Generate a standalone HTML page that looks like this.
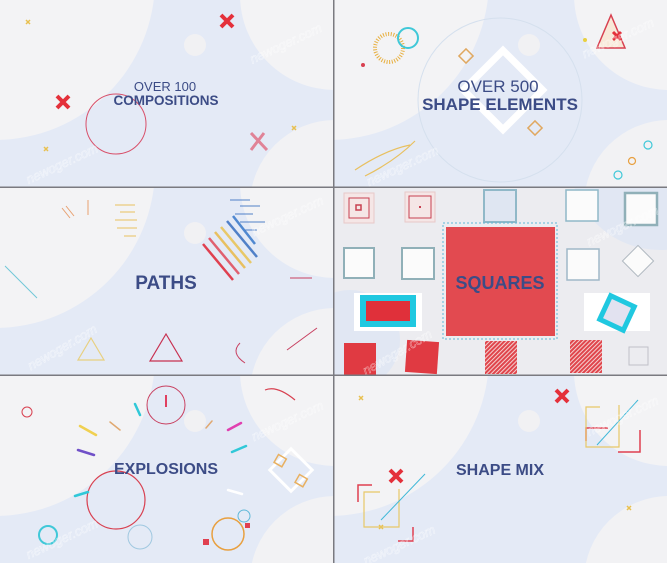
<!DOCTYPE html>
<html><head><meta charset="utf-8"><style>
html,body{margin:0;padding:0;background:#e4eaf6;width:667px;height:563px;overflow:hidden}
svg{display:block}
text{font-family:"Liberation Sans",sans-serif;}
.t{fill:#3c4c86;font-weight:bold;text-anchor:middle}
.l{fill:#3c4c86;text-anchor:middle;font-weight:300}
.wm{fill:none;stroke:#fff;font-size:13px;font-style:italic;stroke-width:0.5;opacity:.55}
</style></head><body>
<svg width="667" height="563" viewBox="0 0 667 563" xmlns="http://www.w3.org/2000/svg">
<defs>
<g id="bg">
<rect width="334" height="188" fill="#e4eaf6"/>
<circle cx="-5" cy="-20" r="160" fill="#f3f3f5"/>
<circle cx="335" cy="-5" r="95" fill="#f3f3f5"/>
<circle cx="335" cy="205" r="85" fill="#f2f2f4"/>
<circle cx="195" cy="45" r="11" fill="#f1f1f3"/>
</g>
<pattern id="hatch" width="3" height="3" patternUnits="userSpaceOnUse" patternTransform="rotate(45)"><rect width="3" height="3" fill="#f4d0d0"/><rect width="2" height="3" fill="#e0454c"/></pattern>
</defs>

<svg x="0" y="0" width="334" height="188"><use href="#bg"/></svg>
<svg x="334" y="0" width="334" height="188"><use href="#bg"/></svg>
<svg x="0" y="188" width="334" height="188"><use href="#bg"/></svg>
<svg x="334" y="188" width="334" height="188"><rect width="334" height="188" fill="#ececf0"/><circle cx="326" cy="-28" r="90" fill="#e1e7f3"/><circle cx="16" cy="152" r="50" fill="#e1e7f3"/></svg>
<svg x="0" y="376" width="334" height="188"><use href="#bg"/></svg>
<svg x="334" y="376" width="334" height="188"><use href="#bg"/></svg>

<!-- Panel 1 -->
<path d="M221 15l12 12M233 15l-12 12" stroke="#e4303a" stroke-width="4"/>
<path d="M57 96l12 12M69 96l-12 12" stroke="#e4303a" stroke-width="4"/>
<path d="M251 133l16 17M264 133l-13 17" stroke="#e06a80" stroke-width="3" opacity=".8"/>
<path d="M26 20l4 4M30 20l-4 4M44 147l4 4M48 147l-4 4M292 126l4 4M296 126l-4 4" stroke="#e8c050" stroke-width="1.5"/>
<circle cx="116" cy="124" r="30" fill="none" stroke="#d8506a" stroke-width="1"/>
<text x="165" y="91" class="l" font-size="13">OVER 100</text>
<text x="166" y="105" class="t" font-size="13.5">COMPOSITIONS</text>
<text x="245" y="50" class="wm" transform="rotate(-25 280 40)">newoger.com</text>
<text x="20" y="175" class="wm" transform="rotate(-25 45 160)">newoger.com</text>

<!-- Panel 2 -->
<circle cx="500" cy="100" r="82" fill="none" stroke="#d5e0ee" stroke-width="1"/>
<rect x="475" y="62" width="56" height="56" fill="none" stroke="#fff" stroke-width="7" transform="rotate(45 503 90)"/>
<circle cx="389" cy="48" r="14" fill="none" stroke="#e8b040" stroke-width="4" stroke-dasharray="1 1.6"/>
<circle cx="408" cy="38" r="10" fill="none" stroke="#40c8d8" stroke-width="2"/>
<circle cx="363" cy="65" r="2" fill="#d84050"/>
<rect x="461" y="51" width="10" height="10" fill="none" stroke="#e0a860" stroke-width="1.5" transform="rotate(45 466 56)"/>
<rect x="530" y="123" width="10" height="10" fill="none" stroke="#e0a860" stroke-width="1.5" transform="rotate(45 535 128)"/>
<path d="M597 48l14-33 14 33z" fill="#f8e8d8" stroke="#d84050" stroke-width="1.5"/>
<path d="M613 32l8 8M621 32l-8 8" stroke="#e4303a" stroke-width="3"/>
<circle cx="585" cy="40" r="2" fill="#e8d040"/>
<circle cx="648" cy="145" r="4" fill="none" stroke="#40c8d8" stroke-width="1.2"/>
<circle cx="632" cy="161" r="3.5" fill="none" stroke="#e8a040" stroke-width="1.2"/>
<circle cx="618" cy="175" r="4" fill="none" stroke="#40c8d8" stroke-width="1.2"/>
<path d="M355 170q30 -20 55 -25M365 176q30 -15 50 -35" stroke="#e8c060" fill="none" stroke-width="1.2"/>
<text x="498" y="92" class="l" font-size="17">OVER 500</text>
<text x="500" y="110" class="t" font-size="17">SHAPE ELEMENTS</text>
<text x="360" y="175" class="wm" transform="rotate(-25 390 160)">newoger.com</text>
<text x="575" y="45" class="wm" transform="rotate(-25 610 30)">newoger.com</text>

<!-- Panel 3 -->
<g stroke-width="2.5">
<path d="M203 244l30 36" stroke="#e04050"/><path d="M209 238l30 36" stroke="#e06070"/>
<path d="M215 232l30 36" stroke="#e8c060"/><path d="M221 227l30 36" stroke="#e8c868"/>
<path d="M227 221l30 36" stroke="#5080c8"/><path d="M233 216l22 28" stroke="#5088d0"/>
</g>
<path d="M91 338l-13 22h26z" fill="none" stroke="#e8d080" stroke-width="1.2"/>
<path d="M166 334l-16 27h32z" fill="none" stroke="#c83050" stroke-width="1.2"/>
<path d="M5 266l32 32" stroke="#70c8d8" stroke-width="1"/>
<path d="M287 350l30-22M290 278h22" stroke="#c84060" stroke-width="1"/>
<path d="M240 343q-10 10 5 20" fill="none" stroke="#c84060" stroke-width="1"/>
<g stroke-width="1"><path d="M115 205h20M120 212h15M115 220h22M117 228h20M124 236h12" stroke="#e8c060"/><path d="M230 200h20M240 206h20M235 214h18M240 222h25M245 230h12" stroke="#5080c8"/><path d="M62 208l8 10M66 206l8 10M88 200v15" stroke="#e8a070"/></g>
<text x="166" y="289" class="t" font-size="19">PATHS</text>
<text x="20" y="360" class="wm" transform="rotate(-30 45 345)">newoger.com</text>
<text x="245" y="225" class="wm" transform="rotate(-25 275 210)">newoger.com</text>

<!-- Panel 4 -->
<g fill="none">
<rect x="344" y="193" width="30" height="30" fill="#f5e6e6" stroke="#e8c8c8"/><rect x="349" y="198" width="20" height="20" stroke="#c84050"/><rect x="356" y="205" width="5" height="5" stroke="#c84050" stroke-width="1.5"/>
<rect x="405" y="192" width="30" height="30" fill="#f5e6e6" stroke="#e8c8c8"/><rect x="409" y="196" width="22" height="22" stroke="#c84050"/><rect x="419" y="206" width="2" height="2" fill="#c84050"/>
<rect x="484" y="190" width="32" height="32" fill="#dfe6f2" stroke="#90b8c8" stroke-width="2"/>
<rect x="566" y="190" width="32" height="31" fill="#fbfbfb" stroke="#90b8c8" stroke-width="1.5"/>
<rect x="625" y="193" width="32" height="32" fill="#fbfbfb" stroke="#90b0b8" stroke-width="2.5"/>
<rect x="344" y="248" width="30" height="30" fill="#fbfbfb" stroke="#90b0b8" stroke-width="2"/>
<rect x="402" y="248" width="32" height="31" fill="#fbfbfb" stroke="#90b0b8" stroke-width="2"/>
<rect x="567" y="249" width="32" height="31" fill="#fbfbfb" stroke="#a0b8c8" stroke-width="1.5"/>
<rect x="627" y="250" width="22" height="22" fill="#fbfbfb" stroke="#b0b8c0" stroke-width="1" transform="rotate(45 638 261)"/>
</g>
<rect x="354" y="293" width="68" height="38" fill="#fff"/>
<rect x="363" y="298" width="50" height="26" fill="#e0303a" stroke="#20c8e0" stroke-width="6"/>
<rect x="584" y="293" width="66" height="38" fill="#fff"/>
<rect x="604" y="300" width="26" height="26" fill="#e2e2f0" stroke="#20c8e0" stroke-width="5" transform="rotate(25 617 313)"/>
<rect x="443" y="223" width="114" height="116" fill="none" stroke="#60b8d8" stroke-dasharray="2 2"/>
<rect x="446" y="227" width="109" height="109" fill="#e24a50"/>
<text x="500" y="289" class="t" font-size="18">SQUARES</text>
<rect x="344" y="343" width="32" height="32" fill="#e03a42"/>
<rect x="406" y="341" width="32" height="32" fill="#e03a42" transform="rotate(4 422 357)"/>
<rect x="485" y="341" width="32" height="33" fill="url(#hatch)"/>
<rect x="570" y="340" width="32" height="33" fill="url(#hatch)"/>
<rect x="629" y="347" width="19" height="18" fill="none" stroke="#c0c0c8"/>
<text x="355" y="365" class="wm" transform="rotate(-30 380 350)">newoger.com</text>
<text x="580" y="235" class="wm" transform="rotate(-25 610 220)">newoger.com</text>

<!-- Panel 5 -->
<circle cx="166" cy="405" r="19" fill="none" stroke="#c84060" stroke-width="1"/><path d="M166 395v12" stroke="#e04060" stroke-width="2"/>
<circle cx="116" cy="500" r="29" fill="none" stroke="#d84050" stroke-width="1.2"/>
<circle cx="27" cy="412" r="5" fill="none" stroke="#d84050" stroke-width="1"/>
<circle cx="48" cy="535" r="9" fill="none" stroke="#40c8d8" stroke-width="2"/>
<circle cx="228" cy="534" r="16" fill="none" stroke="#e8a040" stroke-width="1.5"/>
<circle cx="140" cy="537" r="12" fill="none" stroke="#a0c8e0" stroke-width="1"/>
<circle cx="244" cy="516" r="6" fill="none" stroke="#60b8d8" stroke-width="1"/>
<rect x="203" y="539" width="6" height="6" fill="#e04050"/><rect x="245" y="523" width="5" height="5" fill="#e04050"/>
<g stroke-width="2.5" stroke-linecap="round">
<path d="M80 426l16 9" stroke="#f0d050"/><path d="M78 450l16 5" stroke="#7050c8"/><path d="M135 404l5 11" stroke="#30c8d8"/>
<path d="M228 430l13 -7" stroke="#e040b0"/><path d="M232 452l14 -6" stroke="#30c8d8"/><path d="M75 496l13 -4" stroke="#30c8d8"/>
<path d="M110 422l10 8M206 428l6 -7" stroke="#e0a870" stroke-width="1.5"/><path d="M228 490l14 4" stroke="#fff"/>
</g>
<rect x="276" y="455" width="30" height="30" fill="none" stroke="#fff" stroke-width="3" transform="rotate(45 291 470)"/>
<rect x="276" y="456" width="9" height="9" fill="none" stroke="#e8b060" stroke-width="1.5" transform="rotate(30 280 460)"/>
<rect x="297" y="476" width="9" height="9" fill="none" stroke="#e8b060" stroke-width="1.5" transform="rotate(30 301 480)"/>
<path d="M265 390q12-5 30 10" fill="none" stroke="#d84050" stroke-width="1.2"/>
<text x="166" y="474" class="t" font-size="16">EXPLOSIONS</text>
<text x="20" y="550" class="wm" transform="rotate(-25 45 535)">newoger.com</text>
<text x="245" y="430" class="wm" transform="rotate(-25 275 415)">newoger.com</text>

<!-- Panel 6 -->
<path d="M556 390l12 12M568 390l-12 12" stroke="#e4303a" stroke-width="4"/>
<path d="M390 470l12 12M402 470l-12 12" stroke="#e4303a" stroke-width="4"/>
<path d="M359 396l4 4M363 396l-4 4M627 506l4 4M631 506l-4 4M379 525l4 4M383 525l-4 4" stroke="#e8c050" stroke-width="1.5"/>
<path d="M586 441v-13h22M640 430v22h-22" fill="none" stroke="#e04050" stroke-width="1.5"/>
<path d="M600 407h-14v40h33v-42" fill="none" stroke="#e8c868" stroke-width="1.2"/>
<path d="M597 445l41-45" stroke="#40b8d8" stroke-width="1"/>
<path d="M358 502v-17h14M413 527v14h-15" fill="none" stroke="#e04050" stroke-width="1.5"/>
<path d="M380 492h-16v35h35v-38" fill="none" stroke="#e8c868" stroke-width="1.2"/>
<path d="M381 520l44-46" stroke="#40b8d8" stroke-width="1"/>
<text x="500" y="475" class="t" font-size="16">SHAPE MIX</text>
<text x="357" y="555" class="wm" transform="rotate(-25 385 540)">newoger.com</text>
<text x="580" y="425" class="wm" transform="rotate(-25 610 410)">newoger.com</text>

<!-- dividers -->
<rect x="333" y="0" width="1.5" height="563" fill="#7a7a80"/>
<rect x="0" y="186.5" width="667" height="1.5" fill="#7a7a80"/>
<rect x="0" y="374.5" width="667" height="1.5" fill="#7a7a80"/>
</svg>
</body></html>
